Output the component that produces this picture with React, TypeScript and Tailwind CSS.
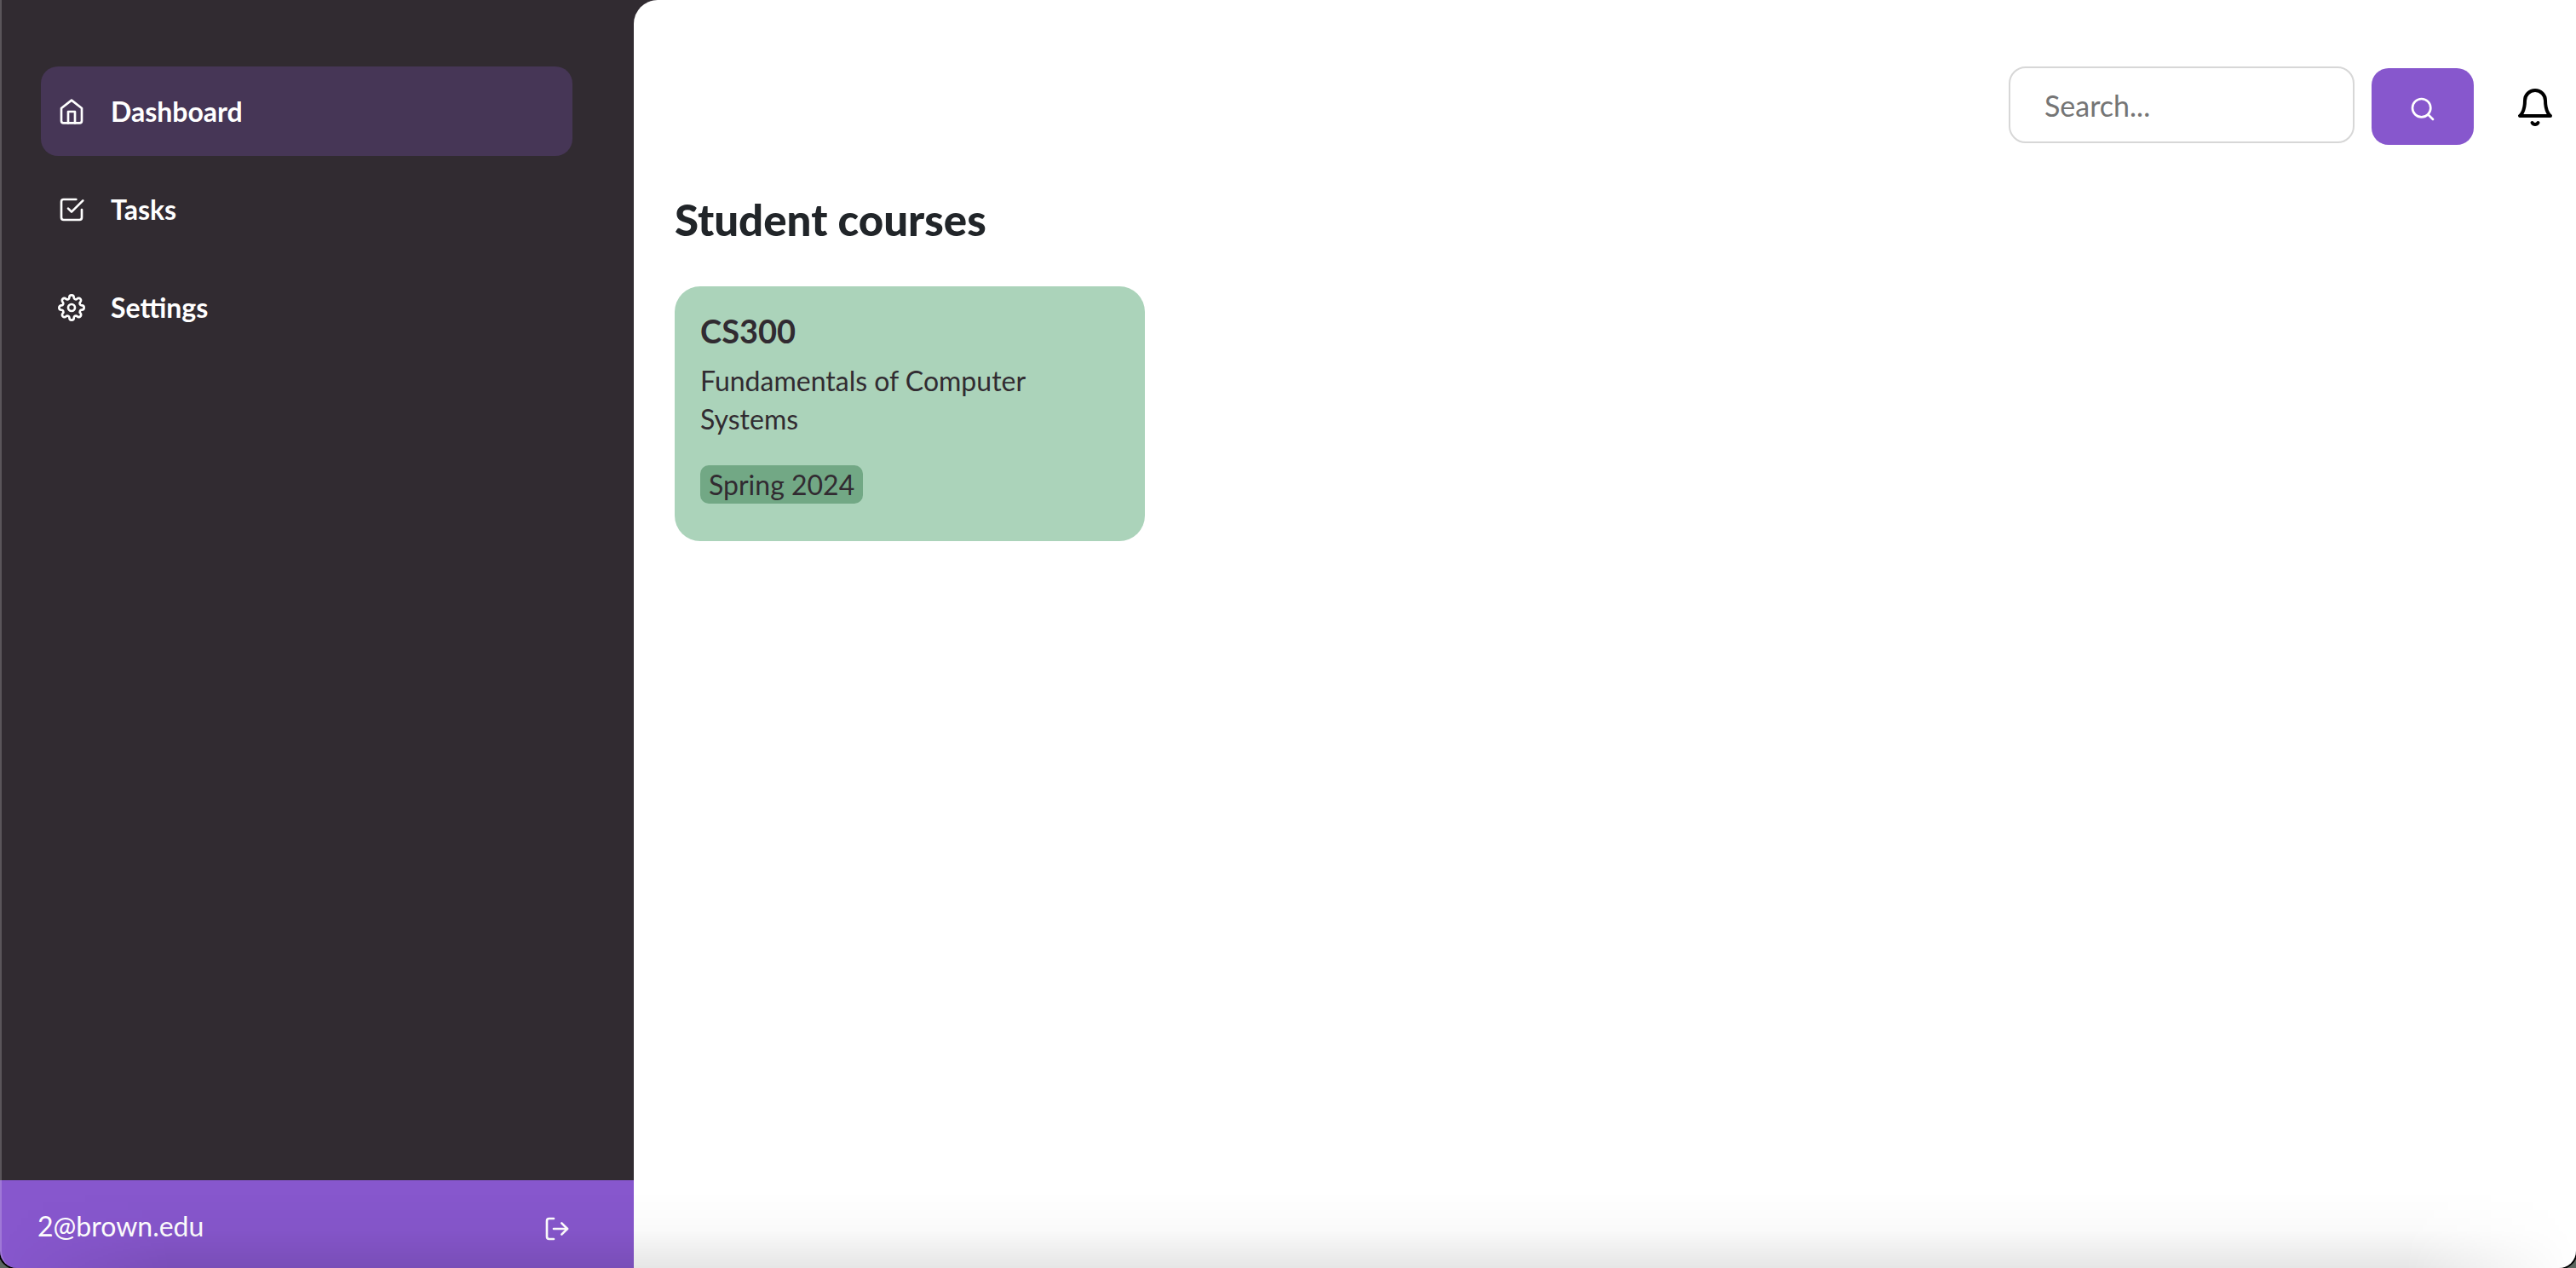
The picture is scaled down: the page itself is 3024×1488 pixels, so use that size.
import { FiBell, FiCheckSquare, FiHome, FiLogOut, FiSearch, FiSettings } from "react-icons/fi";

const navItems = [
  { label: "Dashboard", Icon: FiHome, active: true },
  { label: "Tasks", Icon: FiCheckSquare, active: false },
  { label: "Settings", Icon: FiSettings, active: false },
];

const courses = [
  { code: "CS300", title: "Fundamentals of Computer Systems", term: "Spring 2024" },
];

function Sidebar() {
  return (
    <aside className="flex w-[744px] shrink-0 flex-col bg-[#312b31] text-white">
      <nav className="flex flex-1 flex-col gap-2.5 pt-[78px] pr-[72px] pl-12" aria-label="Main">
        {navItems.map(({ label, Icon, active }) => (
          <a
            key={label}
            href="#"
            aria-current={active ? "page" : undefined}
            className={`flex h-[105px] items-center gap-[30px] rounded-[20px] px-5 text-[32px] font-bold ${active ? "bg-[#463656]" : ""}`}
          >
            <Icon size={32} aria-hidden="true" />
            {label}
          </a>
        ))}
      </nav>
      <div className="flex h-[103px] items-center justify-between bg-[#8757cd] pt-1 pr-[74px] pl-11 text-[32px]">
        <span>2@brown.edu</span>
        <button type="button" aria-label="Log out" className="pt-1.5">
          <FiLogOut size={32} />
        </button>
      </div>
    </aside>
  );
}

function TopBar() {
  return (
    <header className="flex items-start justify-end pt-[78px] pr-6">
      <form className="flex items-start gap-5" onSubmit={(e) => e.preventDefault()}>
        <input
          type="search"
          aria-label="Search"
          placeholder="Search..."
          className="h-[90px] w-[406px] rounded-[20px] border-2 border-[#d7d7d7] px-10 text-[34px] text-[#212529] placeholder:text-[#757575]"
        />
        <button
          type="submit"
          aria-label="Submit search"
          className="mt-0.5 flex h-[90px] w-[120px] items-center justify-center rounded-[20px] bg-[#8757cd] pt-1.5 text-white"
        >
          <FiSearch size={32} />
        </button>
      </form>
      <button type="button" aria-label="Notifications" className="mt-6 ml-12 text-black">
        <FiBell size={48} />
      </button>
    </header>
  );
}

export default function App() {
  return (
    <div className="bg-[#5b665f]">
      <div className="relative flex min-h-screen overflow-hidden rounded-b-[20px] bg-[#312b31] font-['Lato',sans-serif] shadow-[0_0_0_2px_#000]">
        <Sidebar />
        <main className="flex-1 rounded-tl-[28px] bg-white">
          <TopBar />
          <section className="px-12 pt-14">
            <h1 className="text-[51px] leading-[64px] font-black text-[#212529]">Student courses</h1>
            <div className="mt-[46px] flex flex-wrap gap-8">
              {courses.map((course) => (
                <article
                  key={course.code}
                  className="w-[552px] rounded-[30px] bg-[#abd3ba] px-[30px] pt-7 pb-11 text-[32px] leading-[45px] text-[#312b31]"
                >
                  <h2 className="text-[38px] leading-[48px] font-bold">{course.code}</h2>
                  <p className="mt-3 pr-10">{course.title}</p>
                  <span className="mt-8 inline-block rounded-[10px] bg-[#72a885] px-2.5">{course.term}</span>
                </article>
              ))}
            </div>
          </section>
        </main>
        {/* Soft shade along the lower edge, fading out toward both corners */}
        <div className="pointer-events-none absolute inset-x-0 bottom-0 h-[90px] bg-linear-to-b from-black/0 via-black/2 to-black/10 [mask-image:linear-gradient(to_right,transparent,black_200px,black_calc(100%-200px),transparent)]" />
        {/* Light rim on the window's left side */}
        <div className="pointer-events-none absolute inset-0 rounded-bl-[20px] border-l-2 border-white/20" />
      </div>
    </div>
  );
}
